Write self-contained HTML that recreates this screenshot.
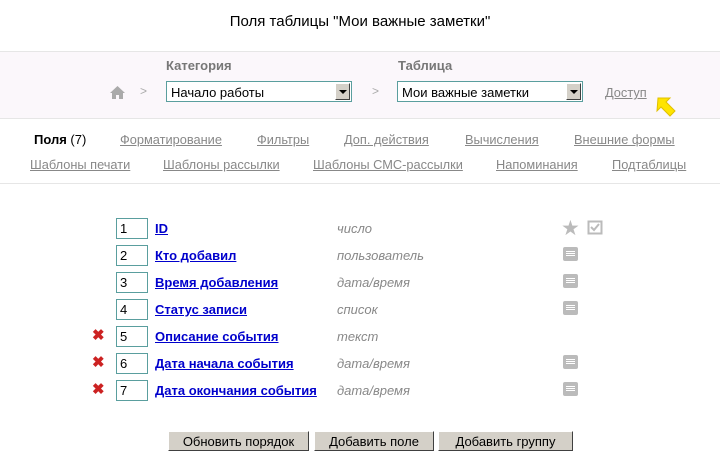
<!DOCTYPE html><html><head><meta charset="utf-8"><style>
body{margin:0;width:720px;height:476px;background:#fff;font-family:"Liberation Sans",sans-serif;position:relative;overflow:hidden}
.a{position:absolute;white-space:nowrap}
.t{font-size:12.8px;color:#888;text-decoration:underline}
.inp{position:absolute;left:116px;width:27px;height:19px;border:1px solid #5a9e9e;font-size:13px;line-height:19px;padding-left:3px;box-sizing:content-box}
.nm{position:absolute;left:155px;font-size:13px;font-weight:bold;color:#00c;text-decoration:underline}
.ty{position:absolute;left:337px;font-size:13px;font-style:italic;color:#888}
.note{position:absolute;left:563px;width:15px;height:14px;background:#bbb;border-radius:2px}
.note:before{content:"";position:absolute;left:3px;top:4px;width:9px;height:1px;background:#fff;box-shadow:0 2px 0 #fff,0 4px 0 #fff}
.x{position:absolute;left:92px;font-size:15px;color:#c22;font-weight:bold}
.btn{position:absolute;top:431px;height:20px;background:#d4d0c8;border:1px solid;border-color:#fff #404040 #404040 #fff;font-size:13px;text-align:center;line-height:20px;box-sizing:border-box}
.sel{position:absolute;top:81px;height:21px;border:1px solid #5a9e9e;font-size:13px;line-height:21px;padding-left:4px;box-sizing:border-box;background:#fff}
.sel b{position:absolute;right:1px;top:1px;width:15px;height:17px;background:#d4d0c8;border:1px solid;border-color:#fff #404040 #404040 #fff;box-sizing:border-box}
.sel b:after{content:"";position:absolute;left:3px;top:6px;border:4px solid transparent;border-top:4px solid #000}
</style></head><body>
<div class="a" style="left:0;width:720px;top:13px;text-align:center;font-size:15px">Поля таблицы "Мои важные заметки"</div>
<div class="a" style="left:0;top:51px;width:720px;height:66px;background:#fbf7fb;border-top:1px solid #e6e6e6;border-bottom:1px solid #e6e6e6"></div>
<div class="a" style="left:166px;top:58px;font-size:13px;font-weight:bold;color:#777">Категория</div>
<div class="a" style="left:398px;top:58px;font-size:13px;font-weight:bold;color:#777">Таблица</div>
<svg class="a" style="left:109px;top:85px" width="17" height="15"><path d="M8.5 1L1 8h2v6h4v-4h3v4h4V8h2z" fill="#aaa"/></svg>
<div class="a" style="left:140px;top:84px;font-size:12px;color:#aaa">&gt;</div>
<div class="a" style="left:372px;top:84px;font-size:12px;color:#aaa">&gt;</div>
<div class="sel" style="left:166px;width:186px">Начало работы<b></b></div>
<div class="sel" style="left:397px;width:186px">Мои важные заметки<b></b></div>
<div class="a t" style="left:605px;top:85px">Доступ</div>
<svg class="a" style="left:654px;top:96px" width="28" height="26"><path d="M4 2h12l-4 4 9 9-5 5-9-9-4 4z" fill="#ffe400" stroke="#e0c000" stroke-width="1"/></svg>
<div class="a" style="left:34px;top:132px;font-size:13px;font-weight:bold">Поля <span style="font-weight:normal">(7)</span></div>
<div class="a t" style="left:120px;top:132px">Форматирование</div>
<div class="a t" style="left:257px;top:132px">Фильтры</div>
<div class="a t" style="left:344px;top:132px">Доп. действия</div>
<div class="a t" style="left:465px;top:132px">Вычисления</div>
<div class="a t" style="left:574px;top:132px">Внешние формы</div>
<div class="a t" style="left:30px;top:157px">Шаблоны печати</div>
<div class="a t" style="left:163px;top:157px">Шаблоны рассылки</div>
<div class="a t" style="left:313px;top:157px">Шаблоны СМС-рассылки</div>
<div class="a t" style="left:496px;top:157px">Напоминания</div>
<div class="a t" style="left:612px;top:157px">Подтаблицы</div>
<div class="a" style="left:0;top:183px;width:720px;height:1px;background:#e6e6e6"></div>

<div class="inp" style="top:218px">1</div><div class="nm" style="top:221px">ID</div><div class="ty" style="top:221px">число</div>
<div class="a" style="left:561px;top:216px;font-size:21px;color:#bbb">★</div>
<svg class="a" style="left:587px;top:219px" width="16" height="16"><rect x="1.5" y="2.5" width="13" height="12" fill="none" stroke="#bbb" stroke-width="2"/><path d="M4 8l3 3 5-6" fill="none" stroke="#bbb" stroke-width="2"/></svg>
<div class="inp" style="top:245px">2</div><div class="nm" style="top:248px">Кто добавил</div><div class="ty" style="top:248px">пользователь</div><div class="note" style="top:247px"></div>
<div class="inp" style="top:272px">3</div><div class="nm" style="top:275px">Время добавления</div><div class="ty" style="top:275px">дата/время</div><div class="note" style="top:274px"></div>
<div class="inp" style="top:299px">4</div><div class="nm" style="top:302px">Статус записи</div><div class="ty" style="top:302px">список</div><div class="note" style="top:301px"></div>
<div class="x" style="top:326px">✖</div><div class="inp" style="top:326px">5</div><div class="nm" style="top:329px">Описание события</div><div class="ty" style="top:329px">текст</div>
<div class="x" style="top:353px">✖</div><div class="inp" style="top:353px">6</div><div class="nm" style="top:356px">Дата начала события</div><div class="ty" style="top:356px">дата/время</div><div class="note" style="top:355px"></div>
<div class="x" style="top:380px">✖</div><div class="inp" style="top:380px">7</div><div class="nm" style="top:383px">Дата окончания события</div><div class="ty" style="top:383px">дата/время</div><div class="note" style="top:382px"></div>

<div class="btn" style="left:168px;width:141px">Обновить порядок</div>
<div class="btn" style="left:314px;width:120px">Добавить поле</div>
<div class="btn" style="left:438px;width:135px">Добавить группу</div>
</body></html>
